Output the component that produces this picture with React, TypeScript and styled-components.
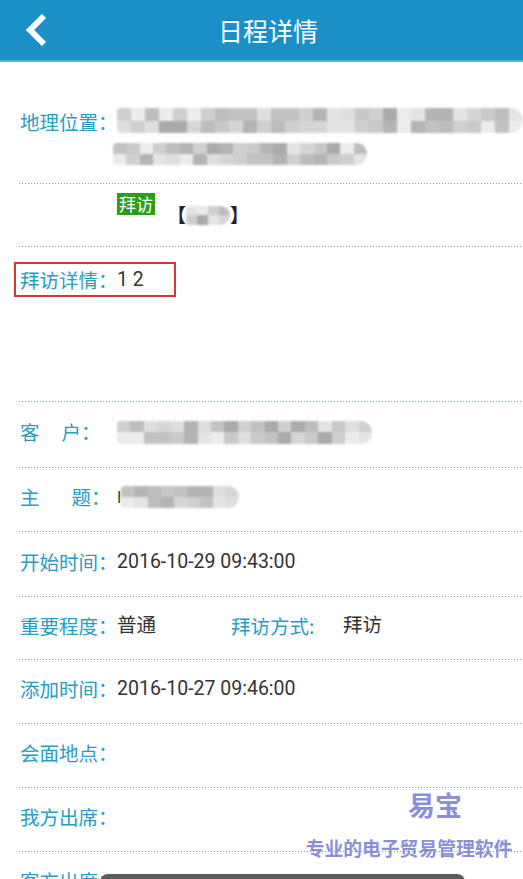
import React from "react";
import styled, { createGlobalStyle } from "styled-components";

const GlobalStyle = createGlobalStyle`
  html, body { margin: 0; padding: 0; background: #fff; }
  body { font-family: Roboto, "Noto Sans CJK SC", sans-serif; }
`;

const Page = styled.div`
  position: relative;
  width: 523px;
  height: 879px;
  overflow: hidden;
  background: #fff;
`;

const Header = styled.header`
  height: 60px;
  background: #1a8fc8;
  border-bottom: 2px solid #4ab6e6;
  display: flex;
  align-items: center;
  justify-content: center;
  padding-left: 13px;
  position: relative;
`;

const BackButton = styled.button`
  position: absolute;
  left: 16px;
  top: 10px;
  width: 40px;
  height: 40px;
  padding: 0;
  border: 0;
  background: transparent;
  display: flex;
  align-items: center;
  justify-content: center;
`;

const Title = styled.h1`
  margin: 0;
  font-family: "Noto Sans CJK SC", sans-serif;
  font-weight: 400;
  font-size: 25px;
  color: #fff;
`;

const List = styled.div`
  margin-left: 19px;
  display: flex;
  flex-direction: column;
`;

const Row = styled.div<{ $h: number; $pt?: number; $align?: string }>`
  height: ${(p) => p.$h}px;
  box-sizing: border-box;
  padding-left: 1px;
  padding-top: ${(p) => p.$pt ?? 0}px;
  padding-bottom: ${(p) => (p.$align ? 0 : 6)}px;
  display: flex;
  align-items: ${(p) => p.$align ?? "center"};
  background-image: repeating-linear-gradient(
    to right,
    #5ea9cc 0 1px,
    transparent 1px 3px
  );
  background-size: 100% 1px;
  background-position: left bottom;
  background-repeat: no-repeat;
`;

const Label = styled.span`
  flex: none;
  width: 97px;
  display: flex;
  font-family: "Noto Sans CJK SC", sans-serif;
  font-size: 19.5px;
  line-height: 28px;
  color: #2a9cc0;
  white-space: pre;
`;

const Gap = styled.span<{ $w: number }>`
  display: inline-block;
  width: ${(p) => p.$w}px;
`;

const Value = styled.span`
  font-family: Roboto, "Noto Sans CJK SC", sans-serif;
  font-size: 19.5px;
  line-height: 28px;
  color: #333;
  white-space: pre;
`;

const SubLabel = styled(Label)`
  width: 112px;
  margin-left: 75px;
`;

const Stack = styled.div`
  display: flex;
  flex-direction: column;
  gap: 10px;
`;

const MosaicWrap = styled.div<{ $w: number; $h: number; $ml?: number }>`
  width: ${(p) => p.$w}px;
  height: ${(p) => p.$h}px;
  margin-left: ${(p) => p.$ml ?? 0}px;
  display: grid;
  grid-auto-flow: column;
  grid-template-rows: 1fr 1fr;
  border-radius: 4px ${(p) => p.$h / 2}px ${(p) => p.$h / 2}px 4px;
  overflow: hidden;
  filter: blur(0.8px);
  flex: none;
`;

const Cell = styled.span`
  display: block;
`;

const shades = ["#c9c9c9", "#b4b4b4", "#dedede", "#cfcfcf", "#aaaaaa", "#e4e4e4", "#bdbdbd", "#d6d6d6", "#c2c2c2", "#ececec"];

function Mosaic({ w, h, seed, ml, cell = 14 }: { w: number; h: number; seed: number; ml?: number; cell?: number }) {
  const cols = Math.ceil(w / cell);
  const cells = [];
  let s = seed;
  for (let i = 0; i < cols * 2; i++) {
    s = (s * 9301 + 49297) % 233280;
    const c = shades[Math.floor((s / 233280) * shades.length)];
    cells.push(<Cell key={i} style={{ background: c }} />);
  }
  return (
    <MosaicWrap $w={w} $h={h} $ml={ml} style={{ gridTemplateColumns: `repeat(${cols}, 1fr)` }}>
      {cells}
    </MosaicWrap>
  );
}

const Tag = styled.span`
  flex: none;
  margin-left: 97px;
  background: #2aa019;
  color: #fff;
  font-family: "Noto Sans CJK SC", sans-serif;
  font-size: 17px;
  line-height: 22px;
  padding: 0 2px;
`;

const Bracket = styled.span`
  display: flex;
  align-items: center;
  margin-left: 12px;
  margin-top: 11px;
  font-family: "Noto Sans CJK SC", sans-serif;
  font-size: 19px;
  line-height: 22px;
  color: #222;
  font-weight: 700;
`;

const Highlight = styled.div`
  margin-left: -6px;
  margin-top: 15px;
  width: 162px;
  height: 35px;
  box-sizing: border-box;
  border: 2px solid #d8343c;
  padding-left: 4px;
  display: flex;
  align-items: center;
`;

const Cursor = styled.span`
  font-family: Roboto, sans-serif;
  font-size: 16px;
  color: #333;
  margin-right: 0;
`;

const Watermark = styled.div`
  position: absolute;
  left: 300px;
  top: 787px;
  width: 218px;
  display: flex;
  flex-direction: column;
  align-items: center;
  font-family: "Noto Sans CJK SC", sans-serif;
  font-weight: 700;
  color: #8a8fd8;
  pointer-events: none;
`;

const Brand = styled.div`
  font-size: 27px;
  line-height: 36px;
  margin-left: 52px;
`;

const Slogan = styled.div`
  margin-top: 13px;
  font-size: 18.8px;
  line-height: 24px;
`;

const Toast = styled.div`
  position: absolute;
  left: 100px;
  top: 874px;
  width: 365px;
  height: 30px;
  background: #5b5b5b;
  border-radius: 8px;
`;

export default function App() {
  return (
    <Page>
      <GlobalStyle />
      <Header>
        <BackButton aria-label="back">
          <svg width="28" height="34" viewBox="0 0 28 34">
            <path d="M22 3 L8 17 L22 31" fill="none" stroke="#fff" strokeWidth="6" strokeLinejoin="miter" />
          </svg>
        </BackButton>
        <Title>日程详情</Title>
      </Header>
      <List>
        <Row $h={122} $pt={46} $align="flex-start">
          <Label>地理位置：</Label>
          <Stack>
            <Mosaic w={406} h={25} seed={3} />
            <Mosaic w={254} h={22} seed={17} ml={-4} />
          </Stack>
        </Row>
        <Row $h={63} $pt={9} $align="flex-start">
          <Tag>拜访</Tag>
          <Bracket>
            【<Mosaic w={44} h={19} seed={8} cell={11} />】
          </Bracket>
        </Row>
        <Row $h={155} $align="flex-start">
          <Highlight>
            <Label>拜访详情：</Label>
            <Value>1 2</Value>
          </Highlight>
        </Row>
        <Row $h={66}>
          <Label>
            客<Gap $w={22} />户：
          </Label>
          <Mosaic w={255} h={23} seed={29} />
        </Row>
        <Row $h={64}>
          <Label>
            主<Gap $w={32} />题：
          </Label>
          <Cursor>I</Cursor>
          <Mosaic w={118} h={22} seed={41} />
        </Row>
        <Row $h={65}>
          <Label>开始时间：</Label>
          <Value>2016-10-29 09:43:00</Value>
        </Row>
        <Row $h={63}>
          <Label>重要程度：</Label>
          <Value>普通</Value>
          <SubLabel>拜访方式:</SubLabel>
          <Value>拜访</Value>
        </Row>
        <Row $h={64}>
          <Label>添加时间：</Label>
          <Value>2016-10-27 09:46:00</Value>
        </Row>
        <Row $h={64}>
          <Label>会面地点：</Label>
        </Row>
        <Row $h={64}>
          <Label>我方出席：</Label>
        </Row>
        <Row $h={64}>
          <Label>客方出席：</Label>
        </Row>
      </List>
      <Watermark>
        <Brand>易宝</Brand>
        <Slogan>专业的电子贸易管理软件</Slogan>
      </Watermark>
      <Toast />
    </Page>
  );
}
